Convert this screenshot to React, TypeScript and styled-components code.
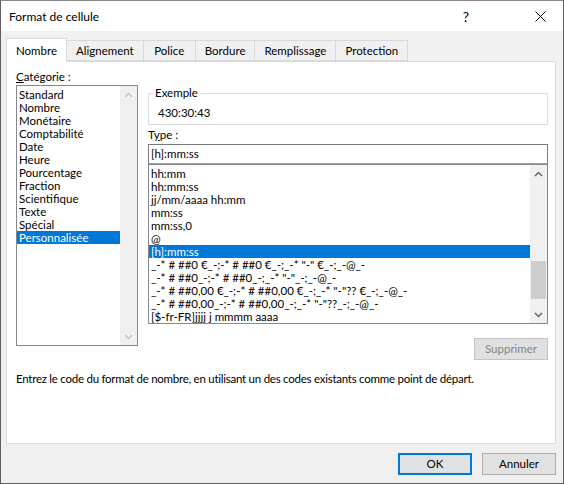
import React from "react";
import styled, { createGlobalStyle } from "styled-components";

const Global = createGlobalStyle`
  html, body { margin: 0; padding: 0; background: #ffffff; }
  body { font-family: Lato, "Noto Sans", sans-serif; font-size: 11.5px; color: #000; }
  * { box-sizing: border-box; }
`;

const Window = styled.div`
  width: 564px;
  height: 484px;
  border: 1px solid #5f5f5f;
  border-top-color: #8a8a8a;
  background: #f0f0f0;
  display: flex;
  flex-direction: column;
  overflow: hidden;
`;

const TitleBar = styled.div`
  height: 30px;
  background: #ffffff;
  display: flex;
  align-items: center;
  padding-left: 8px;
  flex: none;
`;

const Title = styled.div`
  flex: 1;
  font-size: 12px;
  line-height: 16px;
  padding-top: 1px;
`;

const CaptionButton = styled.div<{ $wide?: number }>`
  width: ${(p) => p.$wide ?? 46}px;
  height: 30px;
  display: flex;
  align-items: center;
  justify-content: center;
  font-size: 14px;
`;

const Body = styled.div`
  flex: 1;
  display: flex;
  flex-direction: column;
  padding: 7px 7px 0 5px;
`;

const TabBar = styled.div`
  display: flex;
  align-items: flex-end;
  height: 24px;
  position: relative;
  z-index: 1;
  margin-bottom: -1px;
`;

const Tab = styled.div<{ $active?: boolean }>`
  height: ${(p) => (p.$active ? 24 : 21)}px;
  min-width: 53px;
  padding: 0 9px;
  margin-bottom: ${(p) => (p.$active ? 0 : 1)}px;
  display: flex;
  align-items: center;
  justify-content: center;
  padding-top: ${(p) => (p.$active ? 0 : 1)}px;
  background: ${(p) => (p.$active ? "#ffffff" : "#f0f0f0")};
  border: 1px solid #d9d9d9;
  border-bottom: ${(p) => (p.$active ? "none" : "1px solid #d9d9d9")};
  margin-left: ${(p) => (p.$active ? 0 : -1)}px;
  line-height: 14px;
  white-space: nowrap;
`;

const Panel = styled.div`
  height: 383px;
  background: #ffffff;
  border: 1px solid #d9d9d9;
  padding: 8px 7px 0 9px;
  display: flex;
  flex-direction: column;
`;

const Columns = styled.div`
  display: flex;
  gap: 10px;
`;

const LeftCol = styled.div`
  width: 122px;
  display: flex;
  flex-direction: column;
`;

const RightCol = styled.div`
  flex: 1;
  display: flex;
  flex-direction: column;
`;

const Label = styled.div`
  line-height: 14px;
  height: 15px;
`;

const ListBox = styled.div<{ $h: number }>`
  height: ${(p) => p.$h}px;
  border: 1px solid #828790;
  background: #ffffff;
  display: flex;
`;

const Items = styled.div`
  flex: 1;
  padding-top: 2px;
  overflow: hidden;
`;

const Item = styled.div<{ $sel?: boolean; $pad: number }>`
  height: 13px;
  line-height: 13px;
  padding-left: ${(p) => p.$pad}px;
  white-space: nowrap;
  background: ${(p) => (p.$sel ? "#0078d7" : "transparent")};
  color: ${(p) => (p.$sel ? "#ffffff" : "#000000")};
`;

const ScrollBar = styled.div`
  width: 17px;
  background: #f0f0f0;
  display: flex;
  flex-direction: column;
  align-items: center;
  padding: 0 1px;
`;

const Arrow = styled.div`
  height: 17px;
  width: 100%;
  display: flex;
  align-items: center;
  justify-content: center;
  flex: none;
`;

const Track = styled.div`
  flex: 1;
  width: 100%;
  display: flex;
  flex-direction: column;
`;

const Thumb = styled.div<{ $top: number; $h: number }>`
  margin-top: ${(p) => p.$top}px;
  height: ${(p) => p.$h}px;
  width: 100%;
  background: #cdcdcd;
`;

const GroupBox = styled.fieldset`
  margin: 16px 0 0 0;
  height: 39px;
  border: 1px solid #dcdcdc;
  padding: 0 0 0 9px;
  min-width: 0;
`;

const Legend = styled.legend`
  padding: 0 2px;
  margin-left: -5px;
  line-height: 14px;
`;

const Sample = styled.div`
  line-height: 14px;
  padding-top: 6px;
`;

const TypeLabel = styled.div`
  line-height: 14px;
  height: 14px;
  margin-top: 3px;
`;

const TextInput = styled.div`
  height: 20px;
  border: 1px solid #7a7a7a;
  border-bottom-color: #a0a0a0;
  padding-left: 2px;
  line-height: 18px;
  margin-top: 2px;
  background: #ffffff;
`;

const ButtonRow = styled.div<{ $pad?: string }>`
  display: flex;
  justify-content: flex-end;
  gap: 10px;
  padding: ${(p) => p.$pad ?? "0"};
`;

const Button = styled.div<{ $variant?: "default" | "disabled" | "normal" }>`
  width: 74px;
  height: 22px;
  display: flex;
  align-items: center;
  justify-content: center;
  background: ${(p) => (p.$variant === "disabled" ? "#e0e0e0" : "#e1e1e1")};
  border: ${(p) =>
    p.$variant === "default"
      ? "2px solid #0078d7"
      : p.$variant === "disabled"
      ? "1px solid #c4c4c4"
      : "1px solid #adadad"};
  color: ${(p) => (p.$variant === "disabled" ? "#838383" : "#000000")};
  line-height: 14px;
`;

const Description = styled.div`
  line-height: 14px;
  margin-top: 12px;
  white-space: nowrap;
  letter-spacing: -0.25px;
`;

const Chevron = ({ up, color }: { up?: boolean; color: string }) => (
  <svg width="9" height="6" viewBox="0 0 9 6">
    <polyline
      points={up ? "1,5 4.5,1.5 8,5" : "1,1 4.5,4.5 8,1"}
      fill="none"
      stroke={color}
      strokeWidth="1.4"
    />
  </svg>
);

const categories = [
  "Standard",
  "Nombre",
  "Monétaire",
  "Comptabilité",
  "Date",
  "Heure",
  "Pourcentage",
  "Fraction",
  "Scientifique",
  "Texte",
  "Spécial",
  "Personnalisée",
];

const types = [
  "hh:mm",
  "hh:mm:ss",
  "jj/mm/aaaa hh:mm",
  "mm:ss",
  "mm:ss,0",
  "@",
  "[h]:mm:ss",
  '_-* # ##0 €_-;-* # ##0 €_-;_-* "-" €_-;_-@_-',
  '_-* # ##0_-;-* # ##0_-;_-* "-"_-;_-@_-',
  '_-* # ##0,00 €_-;-* # ##0,00 €_-;_-* "-"?? €_-;_-@_-',
  '_-* # ##0,00_-;-* # ##0,00_-;_-* "-"??_-;_-@_-',
  "[$-fr-FR]jjjj j mmmm aaaa",
];

const tabs = ["Nombre", "Alignement", "Police", "Bordure", "Remplissage", "Protection"];

export default function App() {
  return (
    <>
      <Global />
      <Window>
        <TitleBar>
          <Title>Format de cellule</Title>
          <CaptionButton>?</CaptionButton>
          <CaptionButton $wide={28} />
          <CaptionButton>
            <svg width="11" height="11" viewBox="0 0 11 11">
              <path d="M0.5 0.5 L10.5 10.5 M10.5 0.5 L0.5 10.5" stroke="#000" strokeWidth="1" />
            </svg>
          </CaptionButton>
        </TitleBar>
        <Body>
          <TabBar>
            {tabs.map((t, i) => (
              <Tab key={t} $active={i === 0}>
                {t}
              </Tab>
            ))}
          </TabBar>
          <Panel>
            <Columns>
              <LeftCol>
                <Label>
                  <u>C</u>atégorie :
                </Label>
                <ListBox $h={261}>
                  <Items>
                    {categories.map((c) => (
                      <Item key={c} $pad={2} $sel={c === "Personnalisée"}>
                        {c}
                      </Item>
                    ))}
                  </Items>
                  <ScrollBar>
                    <Arrow>
                      <Chevron up color="#c2c2c2" />
                    </Arrow>
                    <Track />
                    <Arrow>
                      <Chevron color="#c2c2c2" />
                    </Arrow>
                  </ScrollBar>
                </ListBox>
              </LeftCol>
              <RightCol>
                <GroupBox>
                  <Legend>Exemple</Legend>
                  <Sample>430:30:43</Sample>
                </GroupBox>
                <TypeLabel>
                  T<u>y</u>pe :
                </TypeLabel>
                <TextInput>[h]:mm:ss</TextInput>
                <ListBox $h={160}>
                  <Items>
                    {types.map((t, i) => (
                      <Item key={i} $pad={2} $sel={i === 6}>
                        {t}
                      </Item>
                    ))}
                  </Items>
                  <ScrollBar>
                    <Arrow>
                      <Chevron up color="#606060" />
                    </Arrow>
                    <Track>
                      <Thumb $top={79} $h={38} />
                    </Track>
                    <Arrow>
                      <Chevron color="#606060" />
                    </Arrow>
                  </ScrollBar>
                </ListBox>
                <ButtonRow $pad="14px 0 0 0">
                  <Button $variant="disabled">Supprimer</Button>
                </ButtonRow>
              </RightCol>
            </Columns>
            <Description>
              Entrez le code du format de nombre, en utilisant un des codes existants comme point de départ.
            </Description>
          </Panel>
          <ButtonRow $pad="9px 0 0 0">
            <Button $variant="default">OK</Button>
            <Button $variant="normal">Annuler</Button>
          </ButtonRow>
        </Body>
      </Window>
    </>
  );
}
